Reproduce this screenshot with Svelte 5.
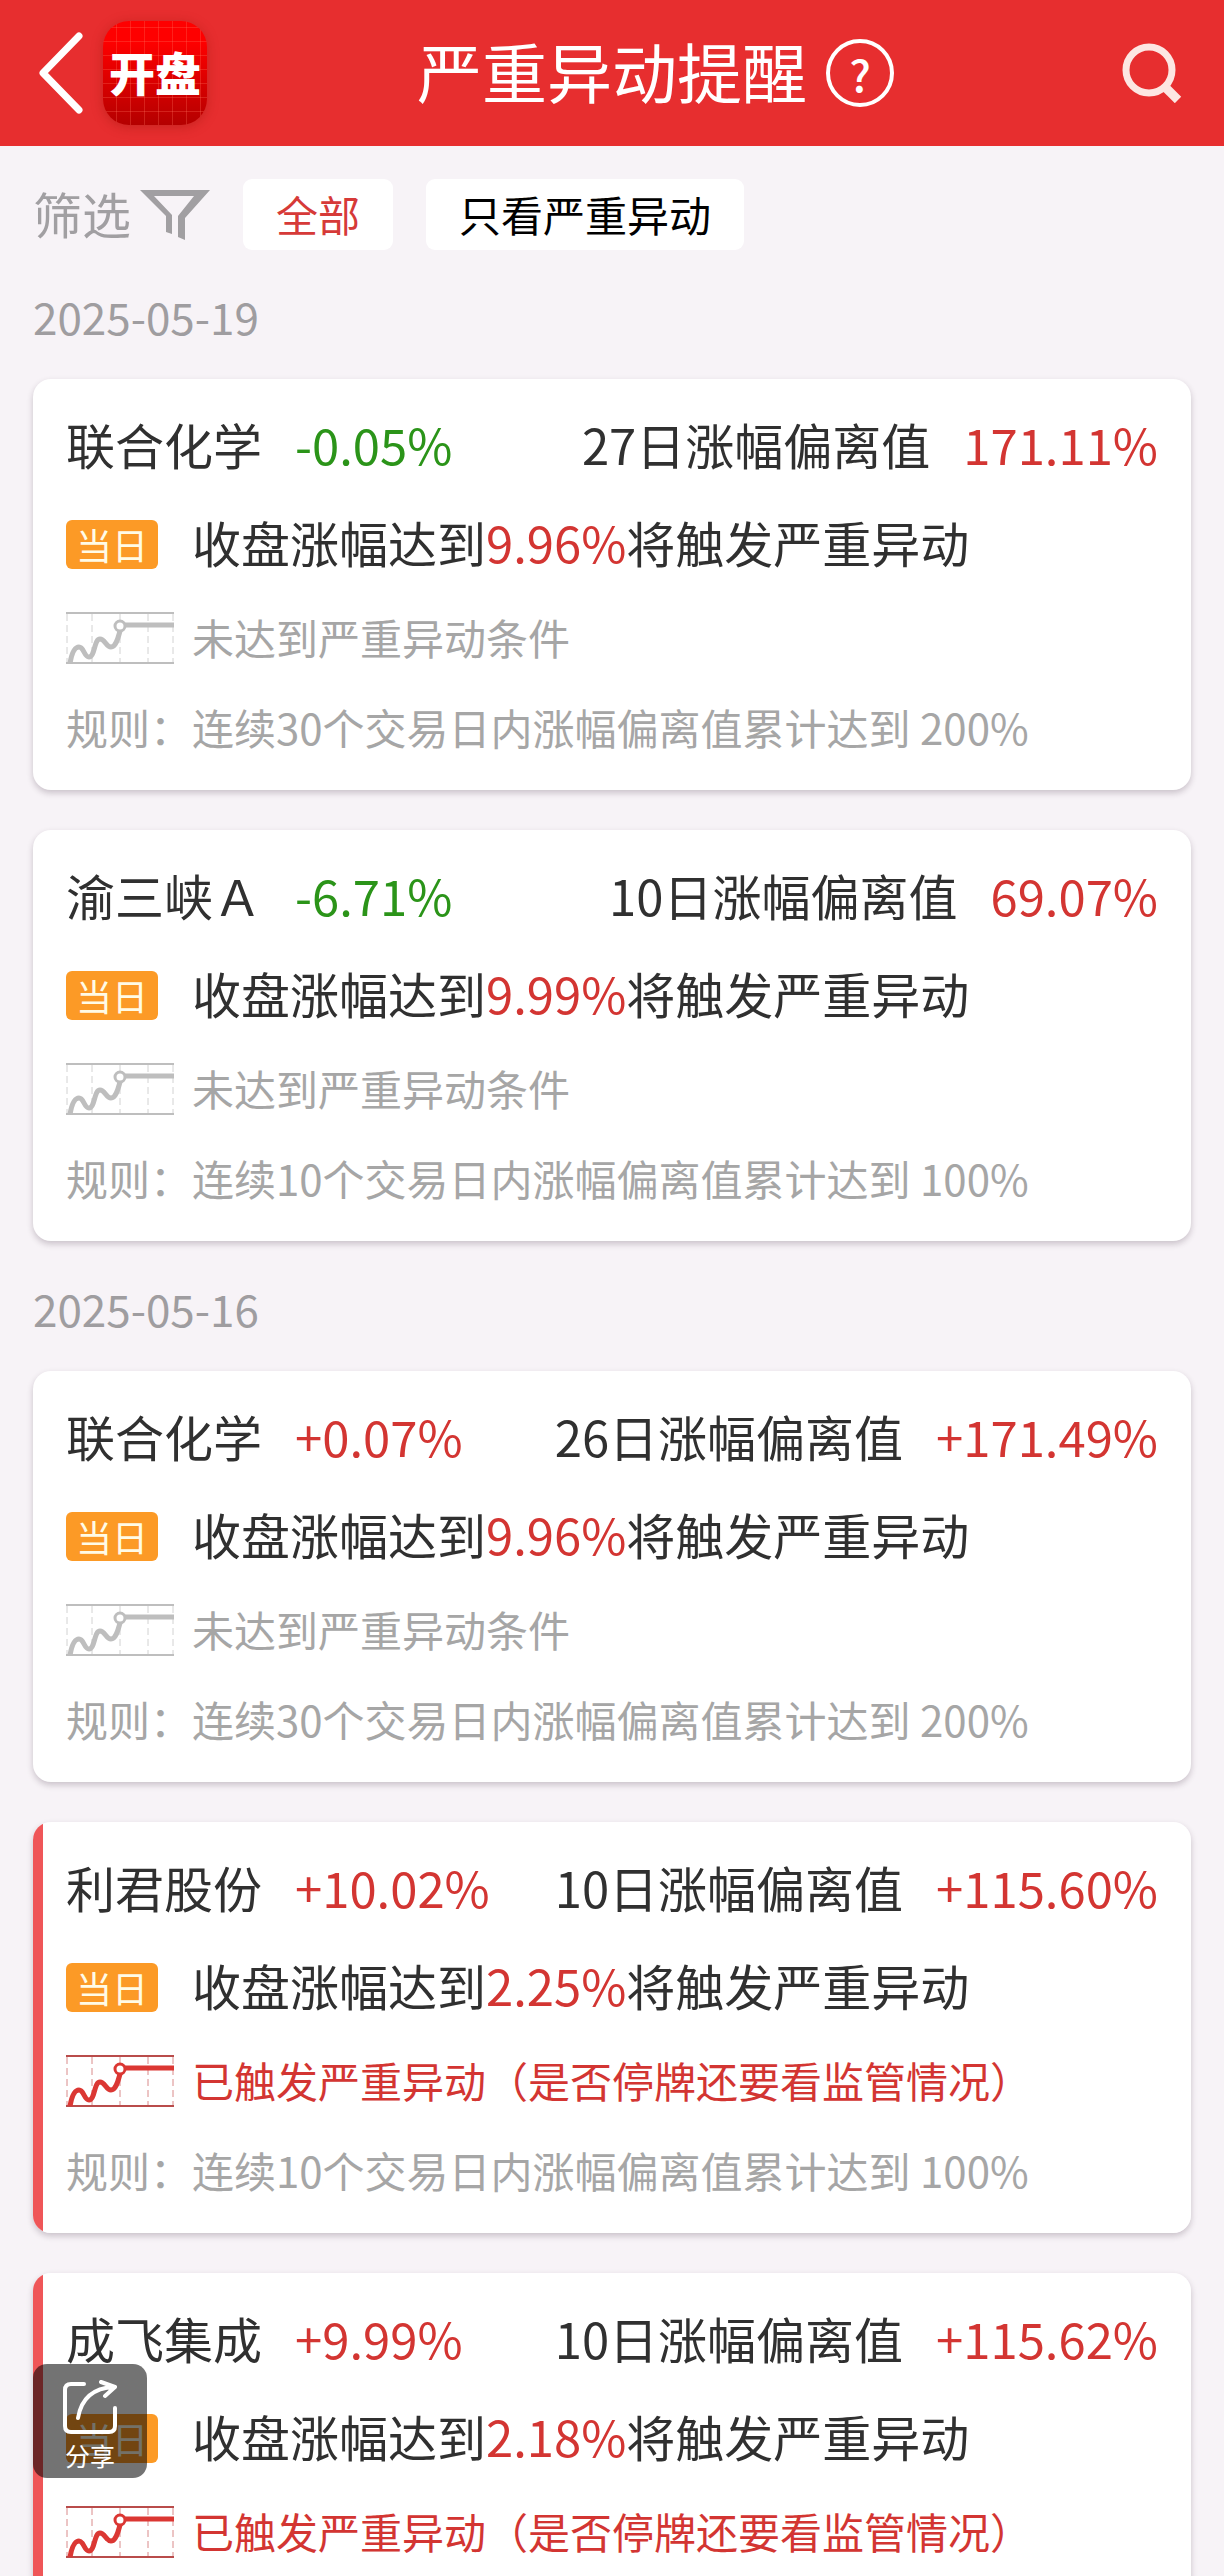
<script lang="ts">
	interface Alert {
		name: string;
		change: string;
		days: number;
		deviation: string;
		target: string;
		triggered: boolean;
		ruleDays: number;
		ruleLimit: string;
	}

	interface Group {
		date: string;
		alerts: Alert[];
	}

	const groups: Group[] = [
		{
			date: '2025-05-19',
			alerts: [
				{ name: '联合化学', change: '-0.05%', days: 27, deviation: '171.11%', target: '9.96%', triggered: false, ruleDays: 30, ruleLimit: '200%' },
				{ name: '渝三峡Ａ', change: '-6.71%', days: 10, deviation: '69.07%', target: '9.99%', triggered: false, ruleDays: 10, ruleLimit: '100%' }
			]
		},
		{
			date: '2025-05-16',
			alerts: [
				{ name: '联合化学', change: '+0.07%', days: 26, deviation: '+171.49%', target: '9.96%', triggered: false, ruleDays: 30, ruleLimit: '200%' },
				{ name: '利君股份', change: '+10.02%', days: 10, deviation: '+115.60%', target: '2.25%', triggered: true, ruleDays: 10, ruleLimit: '100%' },
				{ name: '成飞集成', change: '+9.99%', days: 10, deviation: '+115.62%', target: '2.18%', triggered: true, ruleDays: 10, ruleLimit: '100%' }
			]
		}
	];

	let severeOnly = $state(false);

	let visible = $derived(
		groups
			.map((g) => ({ ...g, alerts: g.alerts.filter((a) => !severeOnly || a.triggered) }))
			.filter((g) => g.alerts.length > 0)
	);
</script>

{#snippet trend()}
	<svg class="trend" viewBox="0 0 108 52" aria-hidden="true">
		<path class="grid" d="M1 2V50M26 2V50M54 2V50M82 2V50M107 2V50" />
		<path class="edge" d="M0 1H108M0 51H108" />
		<path class="line" d="M4 51C6 40 9 35 13 35C18 35 18 45 23 45C29 45 28 27 34 27C39 27 40 35 45 35C50 35 52 26 54 19M59 13H108" />
		<circle class="dot" cx="54" cy="14" r="5" />
	</svg>
{/snippet}

<div class="screen">
	<header class="topbar">
		<div class="topbar-left">
			<button class="icon-btn" aria-label="返回">
				<svg width="44" height="82" viewBox="0 0 44 82" fill="none" stroke="#fff" stroke-width="7" stroke-linecap="round" stroke-linejoin="round">
					<path d="M40 4L4 41L40 78" />
				</svg>
			</button>
			<div class="logo">开盘</div>
		</div>
		<h1>严重异动提醒</h1>
		<div class="topbar-right">
			<button class="help" aria-label="帮助">?</button>
			<button class="icon-btn" aria-label="搜索">
				<svg width="60" height="60" viewBox="0 0 60 60" fill="none" stroke="#fde6e2" stroke-width="7">
					<circle cx="27" cy="27" r="23" />
					<path d="M43 44L56 57" stroke-width="9" />
				</svg>
			</button>
		</div>
	</header>

	<div class="filters">
		<span class="filter-label">
			<span>筛选</span>
			<svg width="70" height="50" viewBox="0 0 70 50" aria-hidden="true">
				<path fill="#a19fa2" d="M0 0H70L45 28V50L38 47V26L54 6H14L32 25V44L26 42V26Z" />
			</svg>
		</span>
		<button class="chip" class:active={!severeOnly} aria-pressed={!severeOnly} onclick={() => (severeOnly = false)}>全部</button>
		<button class="chip" class:active={severeOnly} aria-pressed={severeOnly} onclick={() => (severeOnly = true)}>只看严重异动</button>
	</div>

	<main class="list">
		{#each visible as group (group.date)}
			<section>
				<h2>{group.date}</h2>
				<div class="cards">
					{#each group.alerts as alert (alert.name)}
						<article class="card" class:triggered={alert.triggered}>
							<div class="row head">
								<span class="name">{alert.name}</span>
								<span class={alert.change.startsWith('-') ? 'down' : 'up'}>{alert.change}</span>
								<span class="deviation">{alert.days}日涨幅偏离值</span>
								<span class="up">{alert.deviation}</span>
							</div>
							<div class="row">
								<span class="lead"><span class="badge">当日</span></span>
								<span class="message">收盘涨幅达到<span class="up">{alert.target}</span>将触发严重异动</span>
							</div>
							<div class="row small status">
								<span class="lead">{@render trend()}</span>
								<span class="note">{alert.triggered ? '已触发严重异动（是否停牌还要看监管情况）' : '未达到严重异动条件'}</span>
							</div>
							<div class="row small">
								<span class="lead note">规则：</span>
								<span class="note">连续{alert.ruleDays}个交易日内涨幅偏离值累计达到 {alert.ruleLimit}</span>
							</div>
						</article>
					{/each}
				</div>
			</section>
		{/each}
	</main>

	<button class="share">
		<svg width="54" height="54" viewBox="0 0 54 54" fill="none" stroke="#fff" stroke-width="4" stroke-linecap="round" stroke-linejoin="round" aria-hidden="true">
			<path d="M21 4H8Q2 4 2 10V46Q2 52 8 52H46Q52 52 52 46V28" />
			<path d="M15 38C18 20 29 8 51 7M38 2L52 7L42 16" />
		</svg>
		分享
	</button>
</div>

<style>
	:global(body) {
		margin: 0;
		background: #f7f3f7;
	}

	.screen {
		position: relative;
		display: flex;
		flex-direction: column;
		height: 100vh;
		overflow: hidden;
		background: #f7f3f7;
		color: #303030;
		font-family: 'Noto Sans CJK SC', 'Noto Sans', sans-serif;
		font-size: 49px;
	}

	button {
		margin: 0;
		padding: 0;
		border: 0;
		background: none;
		font-family: inherit;
		cursor: pointer;
	}

	svg {
		display: block;
		flex-shrink: 0;
	}

	.topbar {
		display: grid;
		grid-template-columns: 1fr auto 1fr;
		align-items: center;
		flex-shrink: 0;
		height: 146px;
		background: #e72e2f;
		color: #fff;
	}

	.topbar-left {
		display: flex;
		align-items: center;
		gap: 20px;
		padding-left: 39px;
	}

	.logo {
		box-sizing: border-box;
		display: flex;
		align-items: center;
		justify-content: center;
		width: 104px;
		height: 104px;
		padding-bottom: 4px;
		border-radius: 26px;
		background:
			repeating-linear-gradient(90deg, transparent 0 13px, rgba(255, 110, 90, 0.3) 13px 14px),
			repeating-linear-gradient(0deg, transparent 0 13px, rgba(255, 110, 90, 0.3) 13px 14px),
			linear-gradient(#fe0000 20%, #b40000);
		box-shadow: 0 2px 12px rgba(150, 20, 10, 0.4);
		font-size: 46px;
		font-weight: 900;
		line-height: 60px;
	}

	h1 {
		margin: 0;
		padding-bottom: 6px;
		font-size: 65px;
		font-weight: 400;
		line-height: 96px;
	}

	.topbar-right {
		display: flex;
		align-items: center;
		justify-content: space-between;
		padding: 0 42px 0 19px;
	}

	.help {
		box-sizing: border-box;
		width: 68px;
		height: 68px;
		border: 4px solid #fff;
		border-radius: 50%;
		color: #fff;
		font-size: 44px;
		font-weight: 500;
		line-height: 56px;
	}

	.filters {
		display: flex;
		align-items: center;
		gap: 33px;
		flex-shrink: 0;
		padding: 33px 33px 38px;
	}

	.filter-label {
		display: flex;
		align-items: center;
		gap: 9px;
		color: #a19fa2;
		line-height: 67px;
	}

	.filter-label span {
		padding-bottom: 4px;
	}

	.chip {
		padding: 0 33px 2px;
		border-radius: 9px;
		background: #fff;
		color: #000;
		font-size: 42px;
		line-height: 69px;
	}

	.chip.active {
		color: #d63a38;
	}

	.list {
		display: flex;
		flex-direction: column;
		gap: 39px;
		flex: 1;
		min-height: 0;
		padding: 0 33px 40px;
		overflow-y: auto;
		scrollbar-width: none;
	}

	h2 {
		margin: 0 0 31px;
		padding-bottom: 4px;
		color: #9f9da0;
		font-size: 44px;
		font-weight: 400;
		line-height: 56px;
	}

	.cards {
		display: flex;
		flex-direction: column;
		gap: 40px;
	}

	.card {
		display: flex;
		flex-direction: column;
		gap: 28px;
		padding: 32px 33px 31px;
		border-radius: 18px;
		background: #fff;
		box-shadow: 0 3px 6px rgba(40, 20, 40, 0.22);
	}

	.card.triggered {
		background: linear-gradient(90deg, #ef5658 10px, #fff 10px);
	}

	.row {
		display: flex;
		align-items: center;
		white-space: nowrap;
	}

	.head {
		gap: 33px;
	}

	.head,
	.message {
		padding-bottom: 4px;
		line-height: 66px;
	}

	.deviation {
		margin-left: auto;
	}

	.small {
		color: #a6a6a6;
		font-size: 42px;
	}

	.note {
		padding-bottom: 2px;
		line-height: 60px;
	}

	.lead {
		flex-shrink: 0;
		width: 126px;
	}

	.badge {
		display: block;
		width: 92px;
		border-radius: 6px;
		background: #fc9a26;
		color: #fffbe6;
		font-size: 36px;
		line-height: 49px;
		text-align: center;
	}

	.up {
		color: #d33532;
	}

	.down {
		color: #2b9419;
	}

	.triggered .status {
		color: #d33532;
	}

	.trend {
		width: 108px;
		height: 52px;
		fill: none;
		stroke: #bebebe;
	}

	.trend .grid {
		stroke: #d2d2d2;
		stroke-dasharray: 7 4;
	}

	.trend .edge {
		stroke-width: 2;
	}

	.trend .line {
		stroke-width: 5;
	}

	.trend .dot {
		fill: #fff;
		stroke-width: 3;
	}

	.triggered .trend {
		stroke: #db3733;
	}

	.triggered .trend .grid {
		stroke: #d98a8a;
	}

	.triggered .trend .edge {
		stroke: #b94c4b;
	}

	.share {
		position: absolute;
		bottom: 98px;
		left: 33px;
		display: flex;
		flex-direction: column;
		align-items: center;
		gap: 5px;
		box-sizing: border-box;
		width: 114px;
		height: 114px;
		padding-top: 16px;
		border-radius: 14px;
		background: rgba(0, 0, 0, 0.55);
		color: #fff;
		font-size: 25px;
		line-height: 32px;
	}
</style>
